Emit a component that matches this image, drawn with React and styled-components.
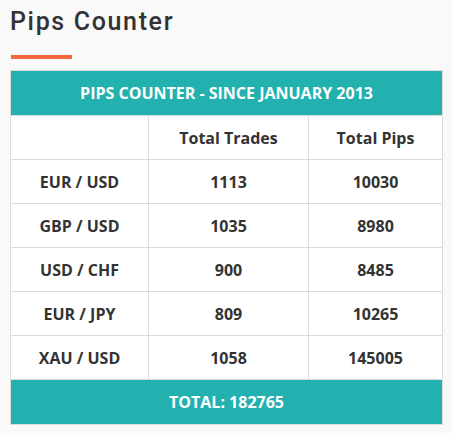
import React from "react";
import styled, { createGlobalStyle } from "styled-components";

const GlobalStyle = createGlobalStyle`
  body {
    margin: 0;
    background: #f9f9f9;
    font-family: 'Open Sans', sans-serif;
  }
`;

const Wrapper = styled.div`
  padding: 4px 10px 9px 10px;
`;

const Title = styled.h2`
  font-family: Roboto, sans-serif;
  font-weight: 500;
  font-size: 25px;
  letter-spacing: 1.65px;
  color: #333;
  margin: 0;
  line-height: 36px;
`;

const Underline = styled.div`
  width: 61px;
  height: 4px;
  background: #f4693c;
  margin: 15px 0 11px 1px;
`;

const Table = styled.table`
  width: 432px;
  table-layout: fixed;
  border-collapse: collapse;
  border: 1px solid #dcdcdc;
  background: #fff;
`;

const Col = styled.col`
  width: ${p => p.$w}px;
`;

const Banner = styled.th`
  background: #22b1ae;
  color: #fff;
  font-size: 16px;
  font-weight: 700;
  height: 44px;
  padding: 0;
  text-align: center;
`;

const Cell = styled.td`
  border: 1px solid #dcdcdc;
  color: #333;
  font-size: 16px;
  font-weight: 700;
  height: 43px;
  padding: 0 6px;
  text-align: center;
`;

const rows = [
  ["EUR / USD", "1113", "10030"],
  ["GBP / USD", "1035", "8980"],
  ["USD / CHF", "900", "8485"],
  ["EUR / JPY", "809", "10265"],
  ["XAU / USD", "1058", "145005"],
];

const App = () => (
  <Wrapper>
    <GlobalStyle />
    <Title>Pips Counter</Title>
    <Underline />
    <Table>
      <colgroup>
        <Col $w={138} />
        <Col $w={160} />
        <Col $w={134} />
      </colgroup>
      <thead>
        <tr>
          <Banner colSpan={3}>PIPS COUNTER - SINCE JANUARY 2013</Banner>
        </tr>
      </thead>
      <tbody>
        <tr>
          <Cell></Cell>
          <Cell>Total Trades</Cell>
          <Cell>Total Pips</Cell>
        </tr>
        {rows.map(r => (
          <tr key={r[0]}>
            {r.map((v, i) => (
              <Cell key={i}>{v}</Cell>
            ))}
          </tr>
        ))}
        <tr>
          <Banner colSpan={3}>TOTAL: 182765</Banner>
        </tr>
      </tbody>
    </Table>
  </Wrapper>
);

export default App;
